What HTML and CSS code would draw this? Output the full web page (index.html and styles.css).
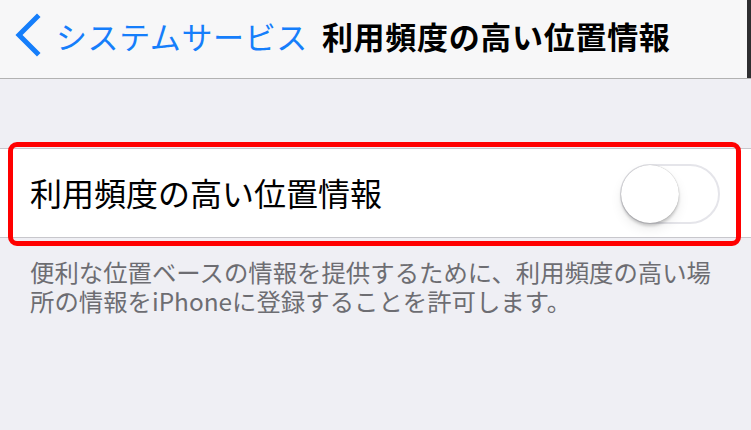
FILE: index.html
```html
<!DOCTYPE html>
<html lang="ja">
<head>
    <meta charset="UTF-8">
    <meta name="viewport" content="width=device-width, initial-scale=1.0">
    <title>利用頻度の高い位置情報</title>
    <link rel="stylesheet" href="styles.css">
</head>
<body>
    <div class="header">
        <a class="back" href="#">
            <svg class="chevron" width="30" height="44" viewBox="0 0 30 44">
                <path d="M25 4 L7 22 L25 40" fill="none" stroke="#157efb" stroke-width="5" stroke-linecap="square" stroke-linejoin="miter"/>
            </svg>
            <span>システムサービス</span>
        </a>
        <div class="title">利用頻度の高い位置情報</div>
    </div>

    <div class="group">
        <div class="cell">
            <div class="cell-label">利用頻度の高い位置情報</div>
            <div class="switch">
                <div class="knob"></div>
            </div>
            <div class="highlight"></div>
        </div>
        <div class="footer">便利な位置ベースの情報を提供するために、利用頻度の高い場所の情報をiPhoneに登録することを許可します。</div>
    </div>
</body>
</html>
```
FILE: styles.css
```css
/* Global Styles */
body {
    margin: 0;
    font-family: "Noto Sans CJK JP", "Noto Sans", sans-serif;
    background-color: #efeff4;
    color: #000000;
    overflow: hidden;
}

a {
    text-decoration: none;
    color: inherit;
}

/* Navigation bar */
.header {
    display: flex;
    align-items: center;
    height: 78px;
    padding-left: 12px;
    background: #f7f7f8;
    border-bottom: 1px solid #b2b2b2;
    box-shadow: inset -4px 0 0 #2e2e30;
}

.back {
    display: flex;
    align-items: center;
    color: #157efb;
    font-size: 31px;
    letter-spacing: 0.6px;
    margin-top: -8px;
}

.chevron {
    margin-right: 14px;
}

.title {
    margin-left: 14px;
    margin-top: -8px;
    font-size: 31px;
    font-weight: 700;
    letter-spacing: 0.7px;
}

/* Settings group */
.group {
    padding-top: 69px;
}

.cell {
    position: relative;
    display: flex;
    align-items: center;
    justify-content: space-between;
    height: 88px;
    padding: 0 31px 0 30px;
    background: #ffffff;
    border-top: 1px solid #c8c7cc;
    border-bottom: 1px solid #c8c7cc;
}

.cell-label {
    font-size: 32px;
    margin-top: -2px;
}

.switch {
    box-sizing: border-box;
    width: 100px;
    height: 60px;
    border: 2px solid #e5e5ea;
    border-radius: 30px;
    background: #ffffff;
    position: relative;
    margin-top: 2px;
}

.knob {
    position: absolute;
    top: -1px;
    left: -1px;
    width: 58px;
    height: 58px;
    border-radius: 50%;
    background: #ffffff;
    box-shadow: 0 3px 3px rgba(0, 0, 0, 0.18), 0 0 1px rgba(0, 0, 0, 0.35), 0 6px 12px rgba(0, 0, 0, 0.08);
}

/* Red annotation frame */
.highlight {
    position: absolute;
    top: -7px;
    left: 8px;
    right: 10px;
    bottom: -9px;
    border: 5px solid #ff0000;
    border-radius: 9px;
    pointer-events: none;
}

.footer {
    padding: 19px 20px 0 30px;
    font-size: 24.4px;
    line-height: 29px;
    color: #6d6d72;
}
```
